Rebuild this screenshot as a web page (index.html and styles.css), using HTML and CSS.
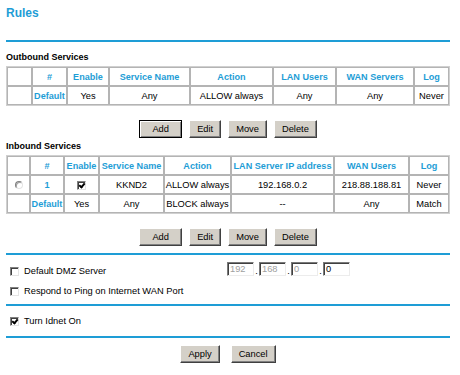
FILE: index.html
```html
<!DOCTYPE html>
<html lang="en">
<head>
    <title>Rules</title>
    <link rel="stylesheet" href="styles.css">
</head>
<body>

<div class="page">
    <h1>Rules</h1>
    <hr class="line top-line">

    <div class="caption">Outbound Services</div>
    <table class="grid outbound">
        <tr>
            <th></th>
            <th>#</th>
            <th>Enable</th>
            <th>Service Name</th>
            <th>Action</th>
            <th>LAN Users</th>
            <th>WAN Servers</th>
            <th>Log</th>
        </tr>
        <tr>
            <td></td>
            <td class="key">Default</td>
            <td>Yes</td>
            <td>Any</td>
            <td>ALLOW always</td>
            <td>Any</td>
            <td>Any</td>
            <td>Never</td>
        </tr>
    </table>
    <div class="buttons">
        <button class="btn btn-default">Add</button>
        <button class="btn">Edit</button>
        <button class="btn">Move</button>
        <button class="btn">Delete</button>
    </div>

    <div class="caption">Inbound Services</div>
    <table class="grid inbound">
        <tr>
            <th></th>
            <th>#</th>
            <th>Enable</th>
            <th>Service Name</th>
            <th>Action</th>
            <th>LAN Server IP address</th>
            <th>WAN Users</th>
            <th>Log</th>
        </tr>
        <tr>
            <td><input type="radio" name="rule" class="radio"></td>
            <td class="key">1</td>
            <td><input type="checkbox" class="check" checked></td>
            <td>KKND2</td>
            <td>ALLOW always</td>
            <td>192.168.0.2</td>
            <td>218.88.188.81</td>
            <td>Never</td>
        </tr>
        <tr>
            <td></td>
            <td class="key">Default</td>
            <td>Yes</td>
            <td>Any</td>
            <td>BLOCK always</td>
            <td>--</td>
            <td>Any</td>
            <td>Match</td>
        </tr>
    </table>
    <div class="buttons">
        <button class="btn btn-wide">Add</button>
        <button class="btn">Edit</button>
        <button class="btn">Move</button>
        <button class="btn">Delete</button>
    </div>

    <hr class="line after-buttons">
    <div class="options">
        <div class="option">
            <label class="opt-label dmz"><input type="checkbox" class="check"> Default DMZ Server</label>
            <div class="ip">
                <input class="octet" value="192" disabled>
                <span class="dot">.</span>
                <input class="octet" value="168" disabled>
                <span class="dot">.</span>
                <input class="octet" value="0" disabled>
                <span class="dot">.</span>
                <input class="octet" value="0">
            </div>
        </div>
        <div class="option">
            <label class="opt-label"><input type="checkbox" class="check"> Respond to Ping on Internet WAN Port</label>
        </div>
    </div>

    <hr class="line">
    <div class="options single">
        <div class="option">
            <label class="opt-label"><input type="checkbox" class="check" checked> Turn Idnet On</label>
        </div>
    </div>

    <hr class="line">
    <div class="buttons submit">
        <button class="btn">Apply</button>
        <button class="btn">Cancel</button>
    </div>
</div>

</body>
</html>
```

FILE: styles.css
```css
body {
    margin: 0;
    font-family: "Liberation Sans", Arial, sans-serif;
    font-size: 9.3px;
    color: #000;
    background: #fff;
}
.page {
    width: 444px;
    margin-left: 6px;
}
h1 {
    margin: 0;
    padding-top: 6px;
    font-size: 12px;
    line-height: 14px;
    color: #1e9dd6;
}
.line {
    height: 2px;
    margin: 0;
    border: 0;
    background: #1e9dd6;
}
.top-line {
    margin-top: 20px;
}
.after-buttons {
    margin-top: 7px;
}
.caption {
    font-size: 9px;
    font-weight: bold;
    line-height: 11px;
    margin: 10px 0 3px;
}
.buttons + .caption {
    margin-top: 3px;
}

/* tables */
.grid {
    width: 444px;
    table-layout: fixed;
    border-collapse: separate;
    border-spacing: 0;
    border: 1px solid #d0d0d0;
}
.grid th,
.grid td {
    box-sizing: border-box;
    height: 19px;
    padding: 0;
    border: 1px solid #b4b4b4;
    text-align: center;
    vertical-align: middle;
    white-space: nowrap;
    font-size: 9.3px;
}
.grid th,
.grid .key {
    font-size: 9.1px;
    font-weight: bold;
    color: #1e9dd6;
}
.outbound th:nth-child(1) { width: 25px; }
.outbound th:nth-child(2) { width: 35px; }
.outbound th:nth-child(3) { width: 42px; }
.outbound th:nth-child(4) { width: 81px; }
.outbound th:nth-child(5) { width: 83px; }
.outbound th:nth-child(6) { width: 63px; }
.outbound th:nth-child(7) { width: 78px; }
.outbound th:nth-child(8) { width: 35px; }
.inbound th:nth-child(1) { width: 23px; }
.inbound th:nth-child(2) { width: 34px; }
.inbound th:nth-child(3) { width: 35px; }
.inbound th:nth-child(4) { width: 65px; }
.inbound th:nth-child(5) { width: 67px; }
.inbound th:nth-child(6) { width: 103px; }
.inbound th:nth-child(7) { width: 75px; }
.inbound th:nth-child(8) { width: 40px; }

/* buttons */
.buttons {
    display: flex;
    justify-content: center;
    gap: 7px;
    margin-top: 14px;
}
.buttons.submit {
    gap: 11px;
    margin-top: 7px;
}
.btn {
    height: 18px;
    padding: 0 7px;
    font-family: "Liberation Sans", Arial, sans-serif;
    font-size: 9.3px;
    color: #000;
    background: #d4d0c8;
    border: 1px solid;
    border-color: #fff #404040 #404040 #fff;
    box-shadow: inset -1px -1px 0 #808080;
}
.btn-default {
    min-width: 43px;
    border-color: #000;
    box-shadow: inset 1px 1px 0 #fff, inset -1px -1px 0 #808080;
}
.btn-wide {
    min-width: 43px;
}

/* checkbox and radio */
.check,
.radio {
    appearance: none;
    position: relative;
    box-sizing: border-box;
    width: 9px;
    height: 9px;
    margin: 0;
    background: #fff;
    border: 1px solid;
    border-color: #808080 #e4e4e4 #e4e4e4 #808080;
    box-shadow: inset 1px 1px 0 #404040;
    vertical-align: middle;
}
.radio {
    width: 8px;
    height: 8px;
    border-radius: 50%;
    box-shadow: inset 1px 1px 0 #a0a0a0;
}
.check:checked::after {
    content: "";
    position: absolute;
    left: 2px;
    top: 0;
    width: 2px;
    height: 4px;
    border: solid #000;
    border-width: 0 2px 2px 0;
    transform: rotate(40deg);
}

/* options */
.options {
    padding: 6px 0 3px;
}
.options.single {
    padding: 5px 0;
}
.option {
    display: flex;
    align-items: flex-start;
    height: 20px;
}
.opt-label {
    display: flex;
    align-items: center;
    gap: 5px;
    height: 20px;
    padding-left: 4px;
}
.dmz {
    width: 217px;
}
.ip {
    display: flex;
    align-items: flex-end;
    margin-top: 1px;
}
.octet {
    box-sizing: border-box;
    width: 27px;
    height: 14px;
    margin: 0;
    padding: 0 2px;
    font-family: "Liberation Sans", Arial, sans-serif;
    font-size: 9.3px;
    color: #000;
    background: #fff;
    border: 1px solid;
    border-color: #7a7a7a #ececec #ececec #7a7a7a;
    box-shadow: inset 1px 1px 0 #404040;
}
.octet:disabled {
    color: #a0a0a0;
}
.dot {
    width: 5px;
    text-align: center;
    line-height: 10px;
}
```
